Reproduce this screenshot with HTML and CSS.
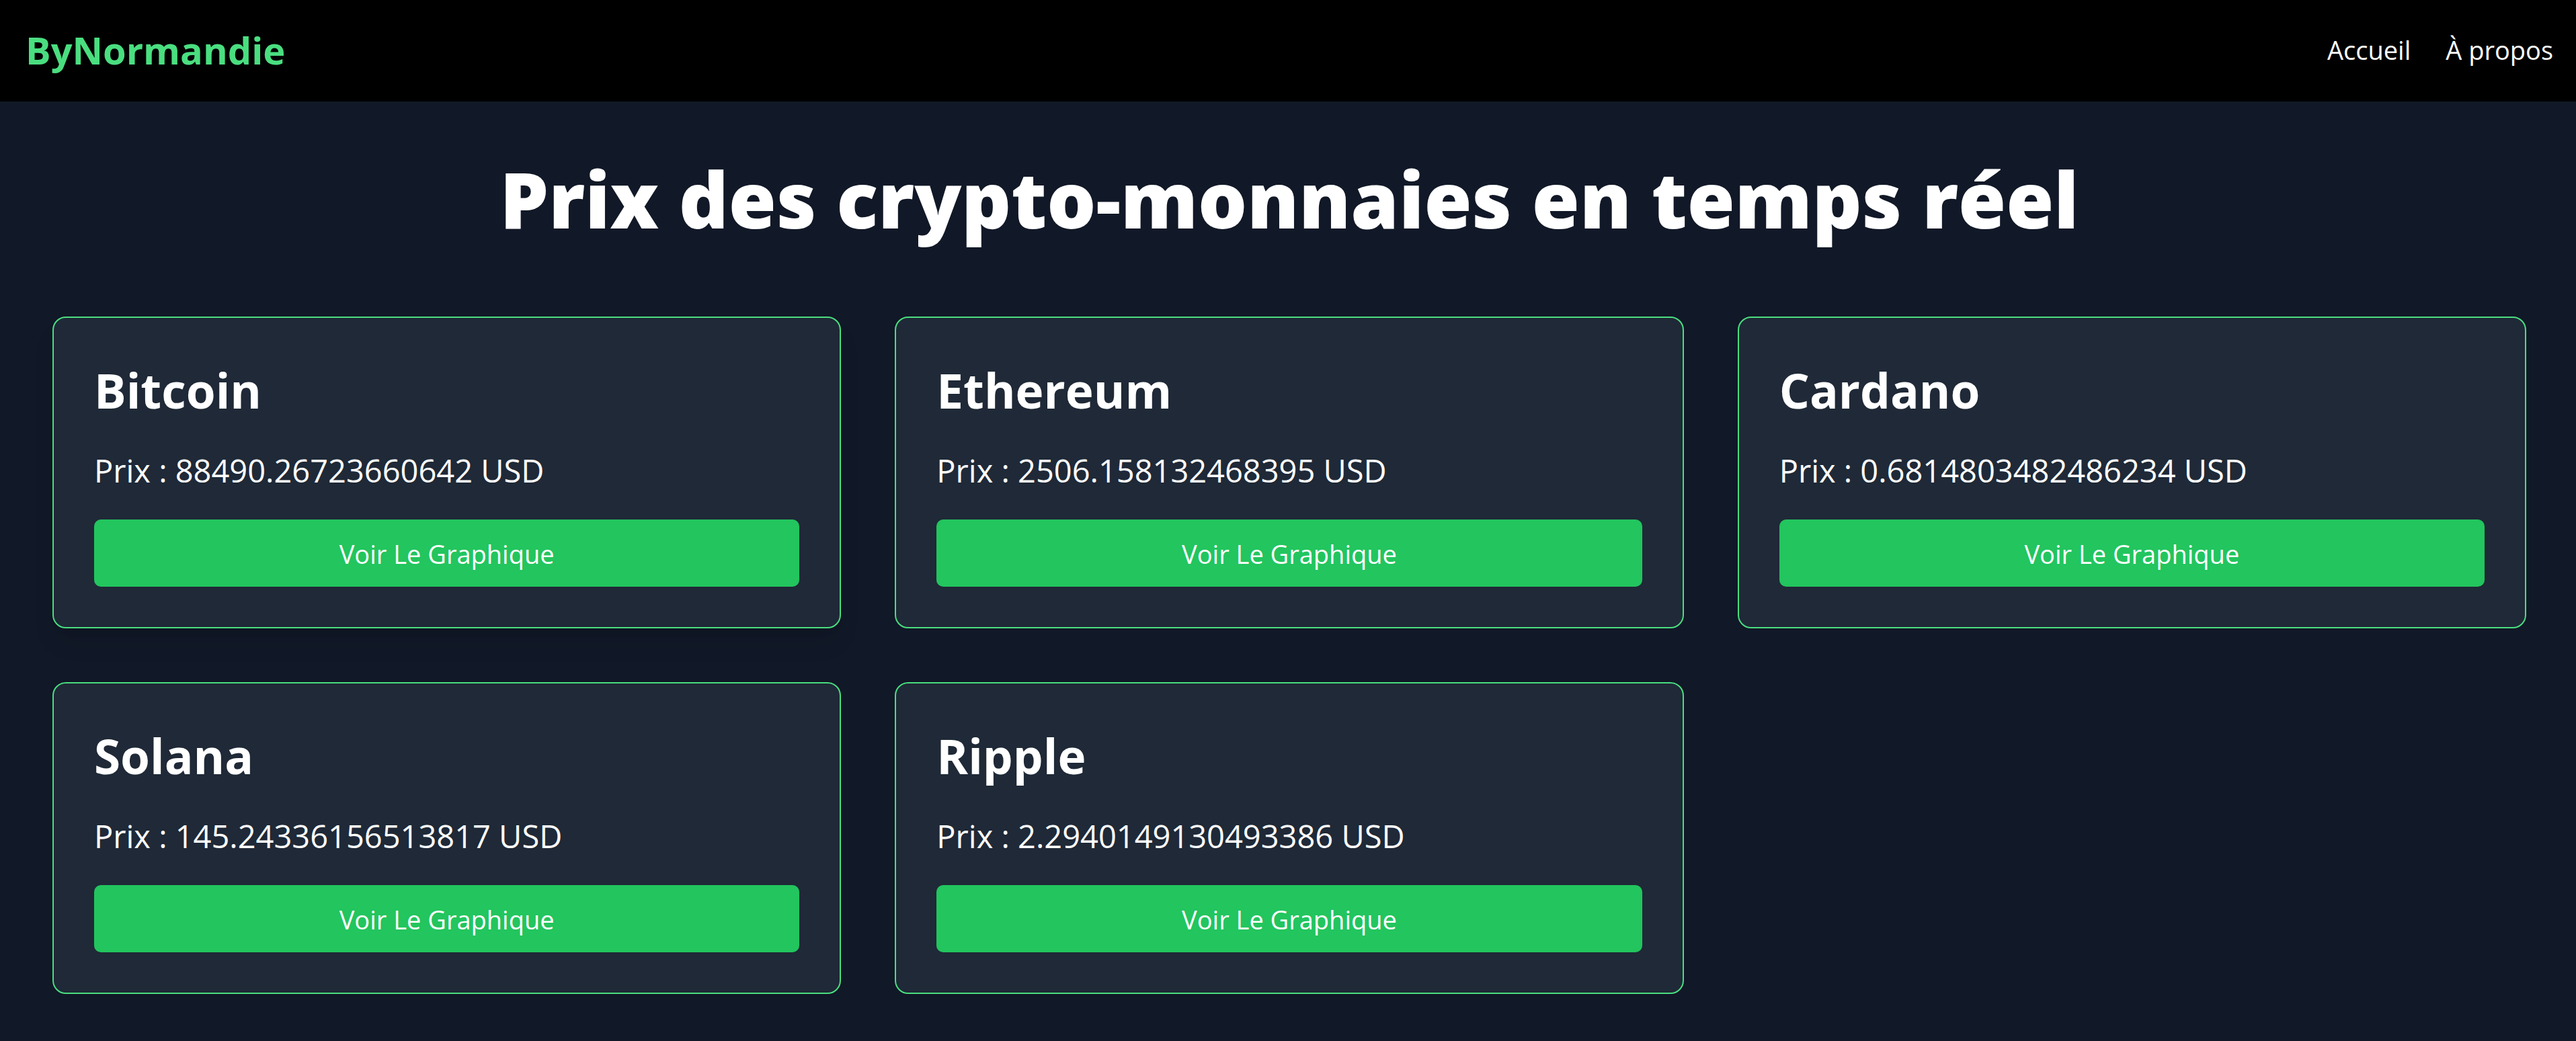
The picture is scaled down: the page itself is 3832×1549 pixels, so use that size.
FILE: index.html
```html
<!DOCTYPE html>
<html lang="fr">
<head>
  <meta charset="utf-8">
  <meta name="viewport" content="width=device-width, initial-scale=1">
  <title>ByNormandie</title>
  <link rel="stylesheet" href="styles.css">
</head>
<body>
  <header class="navbar">
    <a class="logo" href="#">ByNormandie</a>
    <nav class="nav-links">
      <a href="#">Accueil</a>
      <a href="#">À propos</a>
    </nav>
  </header>
  <main class="content">
    <h1 class="title">Prix des crypto-monnaies en temps réel</h1>
    <div class="grid">
      <article class="card card-raised">
        <h2 class="card-title">Bitcoin</h2>
        <p class="price">Prix : 88490.26723660642 USD</p>
        <button class="chart-button" type="button">Voir Le Graphique</button>
      </article>
      <article class="card">
        <h2 class="card-title">Ethereum</h2>
        <p class="price">Prix : 2506.158132468395 USD</p>
        <button class="chart-button" type="button">Voir Le Graphique</button>
      </article>
      <article class="card">
        <h2 class="card-title">Cardano</h2>
        <p class="price">Prix : 0.6814803482486234 USD</p>
        <button class="chart-button" type="button">Voir Le Graphique</button>
      </article>
      <article class="card">
        <h2 class="card-title">Solana</h2>
        <p class="price">Prix : 145.24336156513817 USD</p>
        <button class="chart-button" type="button">Voir Le Graphique</button>
      </article>
      <article class="card">
        <h2 class="card-title">Ripple</h2>
        <p class="price">Prix : 2.2940149130493386 USD</p>
        <button class="chart-button" type="button">Voir Le Graphique</button>
      </article>
    </div>
  </main>
</body>
</html>
```
FILE: styles.css
```css
* {
  box-sizing: border-box;
  margin: 0;
}

body {
  background: #111827;
  color: #fff;
  font-family: "Segoe UI", "Open Sans", "Noto Sans", sans-serif;
}

.navbar {
  display: flex;
  align-items: center;
  justify-content: space-between;
  padding: 34px 34px 37px 38px;
  background: #000;
}

.navbar a {
  color: inherit;
  text-decoration: none;
}

.navbar .logo {
  color: #4ade80;
  font-size: 56px;
  font-weight: 700;
  line-height: 80px;
}

.nav-links {
  display: flex;
  gap: 52px;
  font-size: 38px;
  line-height: 60px;
}

.content {
  padding: 80px 74px 70px 78px;
}

.title {
  margin-bottom: 110px;
  font-size: 115px;
  font-weight: 800;
  line-height: 130px;
  text-align: center;
}

.grid {
  display: grid;
  grid-template-columns: repeat(3, 1fr);
  gap: 80px;
}

.card {
  padding: 60px;
  border: 2px solid #4ade80;
  border-radius: 20px;
  background: #1f2937;
}

.card-raised {
  box-shadow: 0 25px 38px -8px rgb(0 0 0 / 0.1), 0 10px 15px -10px rgb(0 0 0 / 0.1);
}

.card-title {
  margin-bottom: 34px;
  font-size: 71px;
  font-weight: 700;
  line-height: 96px;
}

.price {
  margin-bottom: 36px;
  font-size: 47px;
  line-height: 74px;
}

.chart-button {
  display: block;
  width: 100%;
  padding: 21px 40px 19px;
  border: 0;
  border-radius: 10px;
  background: #22c55e;
  color: inherit;
  font-family: inherit;
  font-size: 38px;
  line-height: 60px;
}
```
